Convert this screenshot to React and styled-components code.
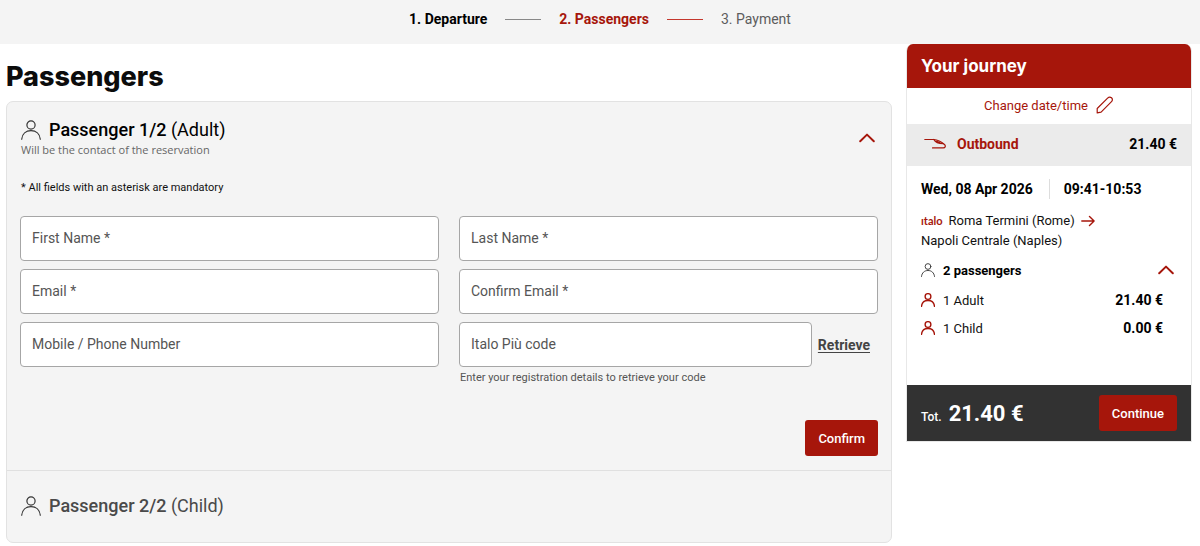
import React, { useState } from 'react';
import styled, { createGlobalStyle } from 'styled-components';

const GlobalStyle = createGlobalStyle`
  * {
    box-sizing: border-box;
  }

  body {
    margin: 0;
    background: #fff;
    color: #111;
    font-family: Roboto, "Liberation Sans", sans-serif;
    font-size: 13px;
  }

  button, input {
    font-family: inherit;
  }

  h1, h2, p, ul {
    margin: 0;
    padding: 0;
  }
`;

const red = '#a6160b';

const PersonIcon = ({ size = 20, color = '#333', stroke = 1.2 }) => (
  <svg width={size} height={size} viewBox="0 0 20 20" fill="none" stroke={color} strokeWidth={stroke} strokeLinecap="round" aria-hidden="true">
    <circle cx="10" cy="5" r="4.1" />
    <path d="M.7 19.2C1.2 13.9 5 10.7 10 10.7s8.800 3.200 9.300 8.500" />
  </svg>
);

const ChevronUp = () => (
  <svg width="16" height="10" viewBox="0 0 16 10" fill="none" stroke={red} strokeWidth="2" strokeLinecap="round" strokeLinejoin="round" aria-hidden="true">
    <path d="M1.200 8.200 8 1.600l6.800 6.600" />
  </svg>
);

const PencilIcon = () => (
  <svg width="18" height="18" viewBox="0 0 18 18" fill="none" stroke={red} strokeWidth="1.200" strokeLinejoin="round" aria-hidden="true">
    <path d="M1.200 16.800v-4.300L11.600 2.100c1.200-1.200 2.800-1.300 3.900-.3 1.200 1.100 1.200 2.700 0 3.900L5.100 16.200Z" />
  </svg>
);

const TrainIcon = () => (
  <svg width="22" height="12" viewBox="0 0 22 12" fill="none" stroke={red} strokeWidth="1.200" strokeLinecap="round" strokeLinejoin="round" aria-hidden="true">
    <path d="M.8 1.500h9c4 .3 8 2.600 10.700 5 1.400 1.400.9 3.400-1.300 3.400H8.500" />
    <path d="M9.800 1.500c1.400 2.600 4.500 4.200 9.400 4.200M12 3l4 1.500" />
  </svg>
);

const ArrowIcon = () => (
  <svg width="14" height="12" viewBox="0 0 14 12" fill="none" stroke={red} strokeWidth="1.400" strokeLinecap="round" strokeLinejoin="round" aria-hidden="true">
    <path d="M.8 6h12.300M8.500 1.500 13.100 6l-4.600 4.500" />
  </svg>
);

const Field = ({ id, label, type = 'text' }) => {
  const [value, setValue] = useState('');
  return (
    <FieldBox>
      <FieldInput id={id} type={type} value={value} onChange={(e) => setValue(e.target.value)} />
      <FieldLabel htmlFor={id} $filled={value !== ''}>{label}</FieldLabel>
    </FieldBox>
  );
};

const App = () => {
  const [formOpen, setFormOpen] = useState(true);
  const [listOpen, setListOpen] = useState(true);

  return (
    <>
      <GlobalStyle />
      <Steps aria-label="Booking steps">
        <Step $state="done">1. Departure</Step>
        <StepLine />
        <Step $state="current" aria-current="step">2. Passengers</Step>
        <StepLine $active={true} />
        <Step>3. Payment</Step>
      </Steps>

      <Page>
        <Content>
          <PageTitle>Passengers</PageTitle>
          <Card>
            <Section>
              <SectionHeader>
                <div>
                  <PassengerTitle>
                    <PersonIcon />
                    <span>Passenger 1/2 <Kind>(Adult)</Kind></span>
                  </PassengerTitle>
                  <ContactNote>Will be the contact of the reservation</ContactNote>
                </div>
                <IconButton aria-label="Toggle passenger 1" aria-expanded={formOpen} onClick={() => setFormOpen(!formOpen)}>
                  <ChevronUp />
                </IconButton>
              </SectionHeader>

              {formOpen &&
                <form onSubmit={(e) => e.preventDefault()}>
                  <Mandatory>* All fields with an asterisk are mandatory</Mandatory>
                  <FieldGrid>
                    <Field id="firstName" label="First Name *" />
                    <Field id="lastName" label="Last Name *" />
                    <Field id="email" label="Email *" type="email" />
                    <Field id="confirmEmail" label="Confirm Email *" type="email" />
                    <Field id="phone" label="Mobile / Phone Number" type="tel" />
                    <div>
                      <CodeRow>
                        <Field id="code" label="Italo Più code" />
                        <RetrieveLink href="#retrieve">Retrieve</RetrieveLink>
                      </CodeRow>
                      <Hint>Enter your registration details to retrieve your code</Hint>
                    </div>
                  </FieldGrid>
                  <Actions>
                    <Button type="submit">Confirm</Button>
                  </Actions>
                </form>
              }
            </Section>
            <NextSection>
              <PassengerTitle $muted>
                <PersonIcon />
                <span>Passenger 2/2 <Kind>(Child)</Kind></span>
              </PassengerTitle>
            </NextSection>
          </Card>
        </Content>

        <Journey>
          <JourneyTitle>Your journey</JourneyTitle>
          <ChangeLink href="#change">
            Change date/time
            <PencilIcon />
          </ChangeLink>
          <Outbound>
            <OutboundName><TrainIcon /> Outbound</OutboundName>
            <span>21.40 €</span>
          </Outbound>
          <Details>
            <When>
              <Day>Wed, 08 Apr 2026</Day>
              <span>09:41-10:53</span>
            </When>
            <Route>
              <Brand>ıtalo</Brand>
              <span>Roma Termini (Rome)</span>
              <ArrowIcon />
            </Route>
            <Destination>Napoli Centrale (Naples)</Destination>
            <Summary>
              <PersonIcon size={14} stroke={1.300} />
              <strong>2 passengers</strong>
              <IconButton aria-label="Toggle passenger list" aria-expanded={listOpen} onClick={() => setListOpen(!listOpen)}>
                <ChevronUp />
              </IconButton>
            </Summary>
            {listOpen &&
              <Fares>
                <Fare>
                  <PersonIcon size={14} color={red} stroke={2} />
                  <span>1 Adult</span>
                  <Price>21.40 €</Price>
                </Fare>
                <Fare>
                  <PersonIcon size={14} color={red} stroke={2} />
                  <span>1 Child</span>
                  <Price>0.00 €</Price>
                </Fare>
              </Fares>
            }
          </Details>
          <TotalBar>
            <Total>Tot. <Amount>21.40 €</Amount></Total>
            <Button type="button">Continue</Button>
          </TotalBar>
        </Journey>
      </Page>
    </>
  );
};

export default App;

const Steps = styled.nav`
  display: flex;
  align-items: center;
  justify-content: center;
  gap: 18px;
  height: 44px;
  padding-bottom: 6px;
  background: #f4f4f4;
`;

const Step = styled.span`
  font-size: 14px;
  font-weight: ${props => props.$state ? 700 : 400};
  color: ${props => props.$state === 'current' ? red : props.$state === 'done' ? '#000' : '#5c5c5c'};
`;

const StepLine = styled.span`
  width: 36px;
  height: 1px;
  background: ${props => props.$active ? '#c4372d' : '#888'};
`;

const Page = styled.div`
  display: flex;
  align-items: flex-start;
  gap: 14px;
  padding: 0 8px 3px 6px;
`;

const Content = styled.main`
  flex: 1;
  min-width: 0;
`;

const PageTitle = styled.h1`
  padding: 16px 0 7px;
  font-family: Inter, Roboto, sans-serif;
  font-size: 27px;
  font-weight: 800;
  line-height: 34px;
  color: #0c0c0c;
`;

const Card = styled.div`
  background: #f4f4f4;
  border: 1px solid #e2e2e2;
  border-radius: 7px;
`;

const Section = styled.section`
  padding: 16px 13px 14px;
`;

const NextSection = styled.section`
  padding: 23px 14px 24px;
  border-top: 1px solid #e0e0e0;
`;

const SectionHeader = styled.div`
  display: flex;
  align-items: center;
  justify-content: space-between;
  padding-left: 1px;
`;

const PassengerTitle = styled.h2`
  display: flex;
  align-items: center;
  gap: 8px;
  font-size: 18px;
  font-weight: 500;
  line-height: 24px;
  color: ${props => props.$muted ? '#4a4a4a' : '#000'};
`;

const Kind = styled.span`
  font-weight: 400;
`;

const ContactNote = styled.p`
  font-family: "Open Sans", "Noto Sans", sans-serif;
  font-size: 11px;
  line-height: 16px;
  color: #666;
`;

const IconButton = styled.button`
  display: flex;
  padding: 4px 3px 4px 4px;
  margin-left: auto;
  border: none;
  background: none;
  cursor: pointer;
`;

const Mandatory = styled.p`
  padding: 22px 1px 20px;
  font-size: 11px;
  line-height: 16px;
  color: #111;
`;

const FieldGrid = styled.div`
  display: grid;
  grid-template-columns: 1fr 1fr;
  align-items: start;
  gap: 8px 20px;
`;

const FieldBox = styled.div`
  display: grid;
  flex: 1;
  min-width: 0;
  align-items: center;

  & > * {
    grid-area: 1 / 1;
  }
`;

const FieldInput = styled.input`
  width: 100%;
  height: 45px;
  padding: 0 11px;
  border: 1px solid #a6a6a6;
  border-radius: 4px;
  background: #fff;
  font-size: 14px;
  color: #111;

  &:focus {
    outline: none;
    border-color: ${red};
  }
`;

const FieldLabel = styled.label`
  padding: 0 12px 2px;
  font-size: 14px;
  color: #555;
  pointer-events: none;
  visibility: ${props => props.$filled ? 'hidden' : 'visible'};
`;

const CodeRow = styled.div`
  display: flex;
  align-items: center;
  gap: 6px;
  padding-right: 8px;
`;

const RetrieveLink = styled.a`
  font-size: 14px;
  font-weight: 700;
  color: #444;
  text-underline-offset: 2px;
`;

const Hint = styled.p`
  padding: 3px 1px 2px;
  font-size: 11px;
  line-height: 16px;
  color: #555;
`;

const Actions = styled.div`
  display: flex;
  justify-content: flex-end;
  padding-top: 32px;
`;

const Button = styled.button`
  height: 36px;
  padding: 0 13px;
  border: none;
  border-radius: 3px;
  background: ${red};
  font-size: 13px;
  font-weight: 500;
  color: #fff;
  cursor: pointer;

  &:hover {
    background: #8c1209;
  }
`;

const Journey = styled.aside`
  flex: 0 0 286px;
  border: 1px solid #e8e8e8;
  border-top: none;
  border-radius: 7px 7px 0 0;
  overflow: hidden;
`;

const JourneyTitle = styled.h2`
  padding: 0 14px;
  background: ${red};
  font-family: Inter, Roboto, sans-serif;
  font-size: 17px;
  font-weight: 700;
  line-height: 44px;
  color: #fff;
`;

const ChangeLink = styled.a`
  display: flex;
  align-items: center;
  justify-content: center;
  gap: 8px;
  height: 36px;
  padding-bottom: 2px;
  font-size: 13px;
  color: ${red};
  text-decoration: none;
`;

const Outbound = styled.div`
  display: flex;
  align-items: center;
  justify-content: space-between;
  height: 42px;
  padding: 0 14px 2px 17px;
  background: #ebebeb;
  font-size: 14px;
  font-weight: 700;
  color: #000;
`;

const OutboundName = styled.span`
  display: flex;
  align-items: center;
  gap: 11px;
  color: ${red};
`;

const Details = styled.div`
  min-height: 219px;
  padding: 13px 14px;
`;

const When = styled.div`
  display: flex;
  align-items: center;
  font-size: 14px;
  font-weight: 700;
  line-height: 20px;
  color: #000;
`;

const Day = styled.span`
  padding-right: 16px;
  margin-right: 14px;
  border-right: 1px solid #ddd;
`;

const Route = styled.div`
  display: flex;
  align-items: center;
  gap: 6px;
  padding-top: 12px;
  line-height: 20px;
`;

const Brand = styled.span`
  font-family: Lato, sans-serif;
  font-size: 11px;
  font-weight: 700;
  color: ${red};
`;

const Destination = styled.p`
  line-height: 20px;
`;

const Summary = styled.div`
  display: flex;
  align-items: center;
  gap: 8px;
  height: 20px;
  margin-top: 9px;
  color: #000;
`;

const Fares = styled.ul`
  list-style: none;
  padding: 6px 14px 0 0;
`;

const Fare = styled.li`
  display: flex;
  align-items: center;
  gap: 8px;
  height: 28px;
`;

const Price = styled.strong`
  margin-left: auto;
  font-size: 14px;
  color: #000;
`;

const TotalBar = styled.div`
  display: flex;
  align-items: center;
  justify-content: space-between;
  height: 56px;
  padding: 0 14px;
  background: #323232;
  color: #fff;
`;

const Total = styled.span`
  font-size: 12px;
  font-weight: 500;
`;

const Amount = styled.strong`
  padding-left: 4px;
  font-size: 22px;
  font-weight: 700;
`;
